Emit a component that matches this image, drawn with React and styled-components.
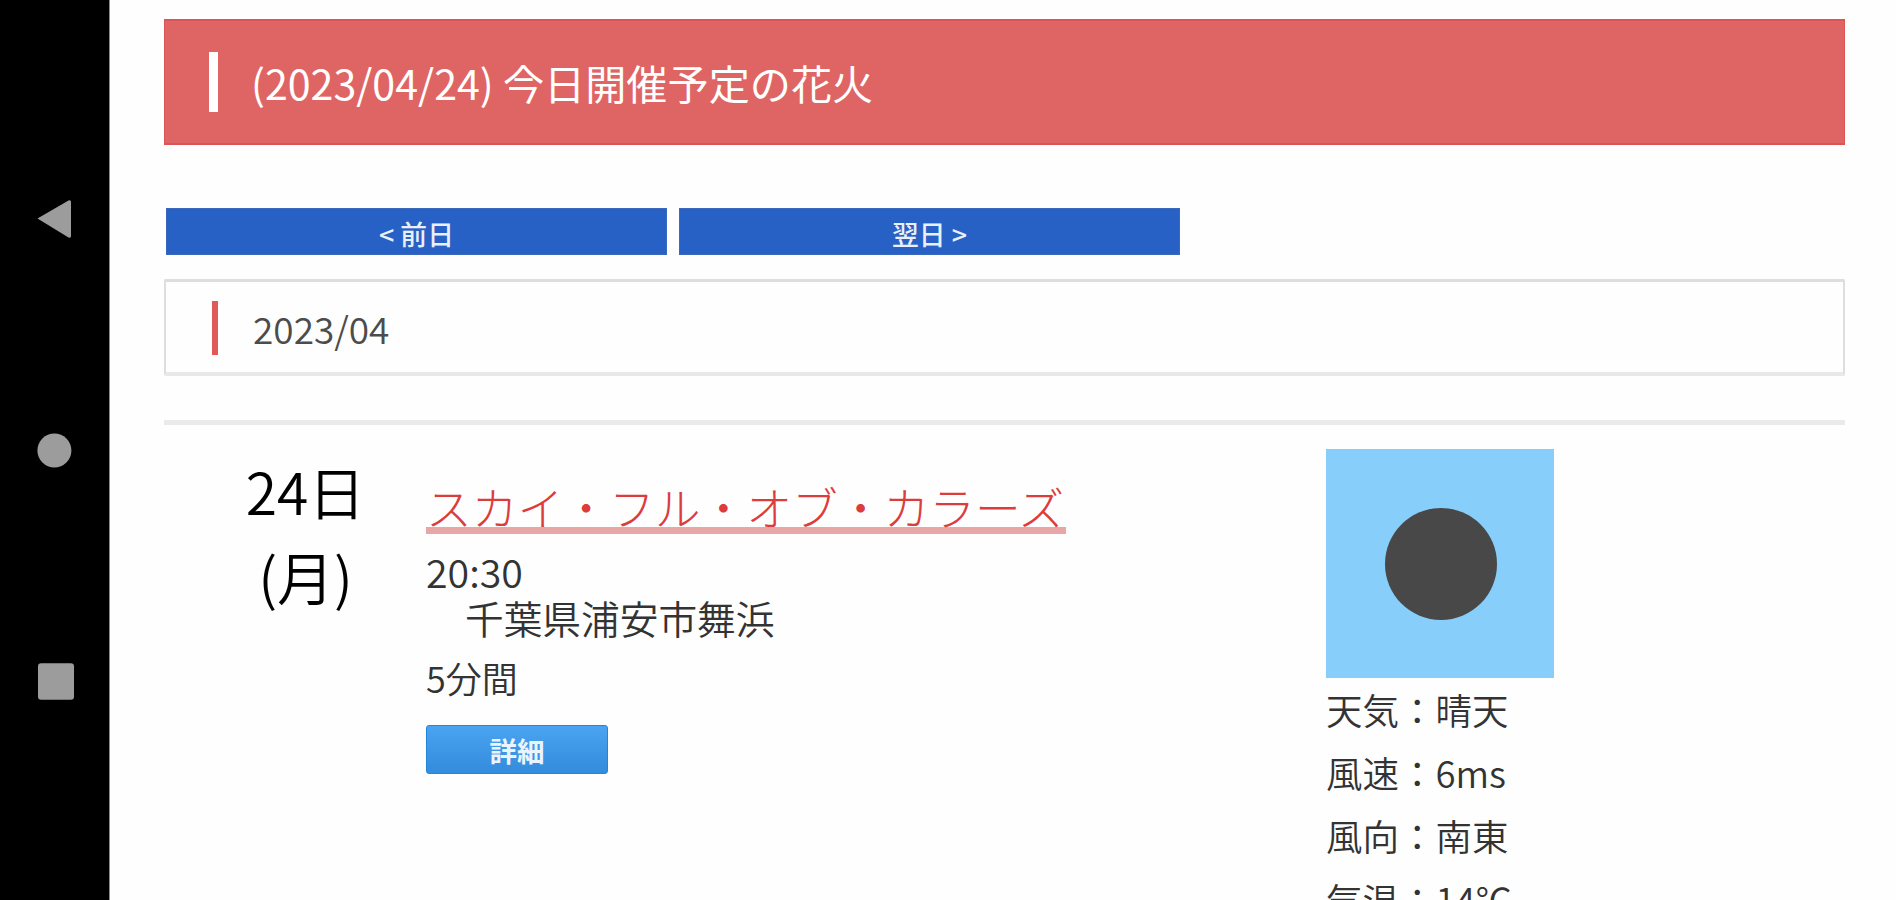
import React from "react";
import styled, { createGlobalStyle } from "styled-components";

const GlobalStyle = createGlobalStyle`
  * {
    box-sizing: border-box;
  }
  body {
    margin: 0;
    overflow: hidden;
    background-color: #fefefe;
    font-family: "Noto Sans CJK JP", "Noto Sans", sans-serif;
    font-weight: 350;
  }
`;

const Screen = styled.div`
  display: flex;
  width: 1896px;
  height: 900px;
  overflow: hidden;
`;

const NavBar = styled.nav`
  width: 110px;
  flex-shrink: 0;
  padding: 200px 0 0 37px;
  background-color: #000;
  border-right: 1px solid #8a8a8a;
  display: flex;
  flex-direction: column;

  svg {
    display: block;
    fill: #9c9c9c;
  }
`;

const NavIcon = styled.svg`
  width: 38px;
  height: 38px;
  flex-shrink: 0;
  margin-bottom: ${(props) => props.$gap || 0}px;
`;

const Page = styled.main`
  width: 1681px;
  margin-left: 54px;
  padding-top: 19px;
  flex-shrink: 0;
`;

const Heading = styled.h1`
  display: flex;
  align-items: center;
  height: 126px;
  margin: 0;
  padding-left: 44px;
  background-color: #df6565;
  border: 1px solid #dc5455;
  border-width: 2px 1px;
  color: #fff;
  font-size: 41.15px;
  font-weight: 400;
  white-space: pre;
`;

const Marker = styled.span`
  width: ${(props) => props.$width}px;
  height: ${(props) => props.$height}px;
  margin-right: ${(props) => props.$gap}px;
  background-color: ${(props) => props.$color};
`;

const DayNav = styled.div`
  display: flex;
  gap: 12px;
  padding: 63px 0 24px 2px;
`;

const DayButton = styled.button`
  width: 501px;
  height: 47px;
  padding: 4px 0 0;
  border: 1px solid #3a68bd;
  background-color: #2861c5;
  color: #e9effb;
  font-family: inherit;
  font-size: 26.8px;
  font-weight: 500;
  line-height: 38px;
`;

const Month = styled.h2`
  display: flex;
  align-items: center;
  height: 97px;
  margin: 0;
  padding: 1px 0 0 46px;
  border: 2px solid #dedede;
  border-top-width: 3px;
  border-bottom: 4px solid #e8e8e8;
  border-radius: 2px;
  color: #4c4c4c;
  font-size: 37px;
  font-weight: 350;
`;

const Day = styled.section`
  display: grid;
  grid-template-columns: 262px 900px 1fr;
  margin-top: 44px;
  border-top: 5px solid #eaeaea;
`;

const DayLabel = styled.div`
  padding: 23px 0 0 21px;
  color: #000;
  font-size: 57px;
  line-height: 84.5px;
  text-align: center;
`;

const Event = styled.div`
  padding-top: 57px;
  color: #333;
`;

const EventLink = styled.a`
  display: block;
  width: 640px;
  height: 52px;
  margin-bottom: 15px;
  border-bottom: 7px solid #e9a6a6;
  color: #dc3c3c;
  font-size: 45.75px;
  font-weight: 300;
  line-height: 48px;
  white-space: nowrap;
`;

const EventLine = styled.div`
  height: ${(props) => props.$height}px;
  padding-left: ${(props) => props.$indent || 0}px;
  font-size: ${(props) => props.$size}px;
  line-height: ${(props) => props.$height}px;
`;

const DetailButton = styled.button`
  display: block;
  width: 182px;
  height: 49px;
  margin-top: 11px;
  padding: 0;
  border: 1px solid #1f86dc;
  border-radius: 3px;
  background: linear-gradient(#4ba4f0, #338cdc);
  color: #eaf4fd;
  font-family: inherit;
  font-size: 27.5px;
  font-weight: 700;
  line-height: 40px;
`;

const Weather = styled.div`
  padding-top: 24px;
  color: #333;
`;

const WeatherIcon = styled.svg`
  display: block;
  width: 228px;
  height: 229px;
  background-color: #87cefa;
`;

const WeatherLine = styled.div`
  height: 63.2px;
  font-size: 36.5px;
  line-height: 63px;
  white-space: nowrap;
`;

const weather = [
  ["天気", "晴天"],
  ["風速", "6ms"],
  ["風向", "南東"],
  ["気温", "14℃"],
];

const App = () => {
  return (
    <Screen>
      <GlobalStyle />
      <NavBar>
        <NavIcon $gap={195} viewBox="0 0 38 38">
          <path d="M0.5 18.5 L31.5 0.5 Q34 -0.3 34 2 V36 Q34 38.5 31.5 37.5 Z" />
        </NavIcon>
        <NavIcon $gap={192} viewBox="0 0 38 38">
          <circle cx="17.4" cy="17.5" r="17" />
        </NavIcon>
        <NavIcon viewBox="0 0 38 38">
          <rect x="1" y="0.3" width="36" height="36.4" rx="3" />
        </NavIcon>
      </NavBar>
      <Page>
        <Heading>
          <Marker $width={9} $height={60} $gap={33} $color="#fff" />
          (2023/04/24) 今日開催予定の花火
        </Heading>
        <DayNav>
          <DayButton>&lt; 前日</DayButton>
          <DayButton>翌日 &gt;</DayButton>
        </DayNav>
        <Month>
          <Marker $width={6} $height={54} $gap={35} $color="#e05a5a" />
          2023/04
        </Month>
        <Day>
          <DayLabel>
            24日
            <br />
            (月)
          </DayLabel>
          <Event>
            <EventLink>スカイ・フル・オブ・カラーズ</EventLink>
            <EventLine $size={39.3} $height={44}>
              20:30
            </EventLine>
            <EventLine $size={38.7} $height={48} $indent={39}>
              千葉県浦安市舞浜
            </EventLine>
            <EventLine $size={36} $height={73}>
              5分間
            </EventLine>
            <DetailButton>詳細</DetailButton>
          </Event>
          <Weather>
            <WeatherIcon viewBox="0 0 228 229">
              <circle cx="115" cy="115" r="56" fill="#484848" />
            </WeatherIcon>
            {weather.map(([label, value]) => (
              <WeatherLine key={label}>
                {label}：{value}
              </WeatherLine>
            ))}
          </Weather>
        </Day>
      </Page>
    </Screen>
  );
};

export default App;
